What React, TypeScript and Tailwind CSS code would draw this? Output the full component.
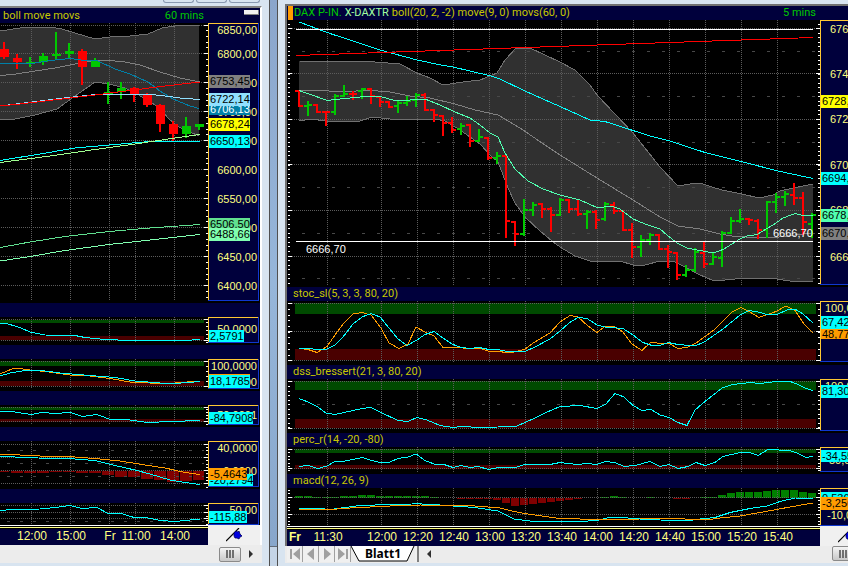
import React from "react";

type Pt = [number, number];
type Line = { color: string; pts: Pt[] };
type Band = { y: number; h: number; color: string };
type Bar = { x: number; y: number; w: number; h: number; color: string };
type Tag = { y: number; h?: number; w: number; text: string; bg: string; fg?: string };
type Label = { y: number; text: string };

const GREEN = "#004a00";
const RED = "#4a0000";
const CYAN = "#00ffff";
const ORANGE = "#ff9c00";
const UP = "#00c800";
const DOWN = "#ff0000";
const GRID = "#5c5c5c";

type Frame = { x: number; w: number; cols: number[]; gridFrom: number; gridTo: number };

const leftFrame: Frame = { x: 0, w: 208, cols: [31, 70, 109, 135, 174], gridFrom: 1, gridTo: 204 };
const rightFrame: Frame = {
  x: 287,
  w: 533,
  cols: [327, 381, 417, 453, 489, 525, 561, 597, 633, 669, 705, 741, 777],
  gridFrom: 292,
  gridTo: 816,
};

const join = (pts: Pt[]) => pts.map((p) => p.join(",")).join(" ");

type PlotProps = {
  frame: Frame;
  top: number;
  height: number;
  bottom: number;
  dotted: number[];
  dashed?: number[];
  bands?: Band[];
  bars?: Bar[];
  lines?: Line[];
  ticks: { from: number; step: number };
  under?: React.ReactNode;
  over?: React.ReactNode;
  labels?: { x: number; y: number; text: string }[];
};

function Plot({ frame, top, height, bottom, dotted, dashed = [], bands = [], bars = [], lines = [], ticks, under, over, labels = [] }: PlotProps) {
  const end = frame.x + frame.w;
  const marks: number[] = [];
  for (let y = ticks.from; y < bottom; y += ticks.step) marks.push(Math.round(y));
  const twoSided = frame.x > 0;
  return (
    <svg className="block min-w-0 flex-1 bg-black" height={height} width="100%">
      <svg
        width="100%"
        height="100%"
        viewBox={`${frame.x} ${top} ${frame.w} ${height}`}
        preserveAspectRatio="none"
        shapeRendering="crispEdges"
        fill="none"
      >
        {under}
        {bands.map((b) => (
          <rect key={b.y} x={twoSided ? 295 : 0} y={b.y} width={frame.gridTo - (twoSided ? 295 : 0)} height={b.h} fill={b.color} />
        ))}
        {bars.map((b) => (
          <rect key={b.x} x={b.x} y={b.y} width={b.w} height={b.h} fill={b.color} />
        ))}
        {frame.cols.map((x) => (
          <path key={x} d={`M${x + 0.5} ${top}V${bottom}`} stroke={GRID} strokeDasharray="1 1" />
        ))}
        {dotted.map((y) => (
          <path key={y} d={`M${frame.gridFrom} ${y + 0.5}H${frame.gridTo}`} stroke={GRID} strokeDasharray="1 1" />
        ))}
        {dashed.map((y) => (
          <path key={y} d={`M${twoSided ? 302 : 7} ${y + 0.5}H${frame.gridTo}`} stroke="#484848" strokeDasharray={twoSided ? "3 12" : "3 10"} />
        ))}
        {lines.map((l, i) => (
          <polyline key={i} points={join(l.pts)} stroke={l.color} />
        ))}
        {over}
        {marks.map((y) => (
          <path key={y} d={`M${end - 2} ${y + 0.5}h2${twoSided ? `M288 ${y + 0.5}h2` : ""}`} stroke="#fff" />
        ))}
        {dotted.map((y) => (
          <path key={y} d={`M${end - 4} ${y + 0.5}h4${twoSided ? `M288 ${y + 0.5}h4` : ""}`} stroke="#fff" />
        ))}
      </svg>
      {labels.map((l) => (
        <text key={l.x} x={`${((l.x - frame.x) / frame.w) * 100}%`} y={l.y - top} className="fill-white text-[11px]">
          {l.text}
        </text>
      ))}
    </svg>
  );
}

type ScaleProps = { top: number; height: number; bottom: number; labels: Label[]; tags: Tag[]; compact?: boolean; labelX?: number };

function Scale({ top, height, bottom, labels, tags, compact, labelX }: ScaleProps) {
  const boxWidth = compact ? 60 : 51;
  return (
    <svg className={compact ? "block w-7 shrink-0 bg-black text-[11px]" : "block w-[52px] shrink-0 bg-black text-[11px]"} height={height}>
      <rect width={boxWidth} height={bottom - top} fill="#1038d0" shapeRendering="crispEdges" />
      <rect width={boxWidth - 1} height={bottom - top - 1} fill="#ffc832" shapeRendering="crispEdges" />
      <rect x="1" y="1" width={boxWidth - 2} height={bottom - top - 2} fill="#00003c" shapeRendering="crispEdges" />
      {labels.map((l) => (
        <text key={l.y} x={labelX ?? 49} y={l.y - top + 4} textAnchor={compact ? "start" : "end"} fill="#ffff80">
          {l.text}
        </text>
      ))}
      {tags.map((t) => (
        <g key={t.text}>
          <rect x="1" y={t.y - top} width={t.w} height={t.h ?? 13} fill={t.bg} shapeRendering="crispEdges" />
          <text x="2" y={t.y - top + 10} fill={t.fg ?? "#000000"}>
            {t.text}
          </text>
        </g>
      ))}
    </svg>
  );
}

function TimeAxis({ frame, labels, line, bold }: { frame: Frame; labels: { x: number; text: string }[]; line: number; bold?: string }) {
  const pct = (x: number) => `${((x - frame.x) / frame.w) * 100}%`;
  return (
    <svg className="block min-w-0 flex-1 bg-[#00003c] text-[12px]" height="20" width="100%">
      <rect width="100%" height={line + 2} fill="#000" />
      <rect width="100%" height="1" fill="#fff" />
      <rect width="100%" y={line} height="1" fill="#ffff80" />
      {bold && (
        <text x="2" y="15" fill="#ffff80" fontWeight="bold">
          {bold}
        </text>
      )}
      {labels.map((l) => (
        <text key={l.text} x={pct(l.x)} y="15" textAnchor="middle" fill="#ffff80">
          {l.text}
        </text>
      ))}
    </svg>
  );
}

function PinButton({ className }: { className: string }) {
  return (
    <button aria-label="Pin scale" className={className}>
      <svg width="18" height="14" viewBox="0 0 18 14" className="block shrink-0">
        <path d="M0 13L13 0" stroke="#000" strokeWidth="1.2" />
        <path d="M8 5l2-2 2 1 1-1 1 3 2 2-2 1-1 2-2-1-2 0-1-2z" fill="#0000e0" stroke="#000060" strokeWidth="0.8" />
      </svg>
    </button>
  );
}

function Thumb() {
  return (
    <button aria-label="Scroll position" className="flex h-[15px] w-[22px] shrink-0 items-center justify-center gap-px rounded-[2px] border border-[#8a8a8a] bg-linear-to-b from-[#f4f4f4] to-[#c8c8c8]">
      <span className="h-2 w-0.5 bg-[#707070]" />
      <span className="h-2 w-0.5 bg-[#707070]" />
      <span className="h-2 w-0.5 bg-[#707070]" />
    </button>
  );
}

function Title({ text = "" }: { text?: string }) {
  return <h2 className="h-3.5 bg-[#00003c] pl-1.5 font-['Roboto',sans-serif] text-[11px] leading-[14px] text-[#c8c800]">{text}</h2>;
}

/* ---------- 60 minute chart ---------- */

const leftUpper: Pt[] = [[0, 31], [20, 28], [50, 27], [62, 29], [75, 33], [85, 36], [95, 39], [110, 37], [130, 36], [148, 34], [162, 28], [175, 26], [199, 25]];
const leftLower: Pt[] = [[0, 120], [15, 119], [35, 115], [57, 109], [75, 96], [88, 87], [95, 82], [109, 84], [125, 88], [137, 94], [147, 100], [160, 108], [168, 118], [177, 126], [190, 132], [199, 136]];

const leftMainLines: Line[] = [
  { color: "#707070", pts: leftUpper },
  { color: "#707070", pts: leftLower },
  { color: "#808080", pts: [[0, 75.5], [13, 74.5], [35, 71], [55, 68], [75, 64], [100, 60], [122, 61.5], [140, 65], [160, 72], [180, 78], [200, 82]] },
];
const leftAverages: Line[] = [
  { color: "#0080a8", pts: [[0, 63.5], [32, 63.5], [50, 60.5], [70, 58.5], [85, 60.5], [98, 61], [115, 69], [130, 74], [148, 82], [160, 91], [173, 99], [190, 106], [199, 108.5]] },
  { color: "#90e0ff", pts: [[0, 106], [60, 98.5], [95, 94.5], [130, 94.5], [152, 94.5], [165, 96], [180, 98], [200, 99.5]] },
  { color: "#ff0000", pts: [[0, 106], [20, 104], [95, 95], [130, 90.5], [165, 86], [200, 82]] },
  { color: CYAN, pts: [[0, 160.5], [40, 154], [75, 148], [109, 145], [150, 141.5], [200, 141.5]] },
  { color: "#a0ff90", pts: [[0, 162.5], [50, 156], [95, 149.5], [135, 144], [165, 139.5], [200, 134.5]] },
  { color: "#60e090", pts: [[0, 247.5], [30, 242], [65, 236.5], [109, 231.5], [150, 228], [200, 224.5]] },
  { color: "#80ffb0", pts: [[0, 261], [30, 256.5], [65, 250.5], [109, 244.5], [150, 240], [200, 234.5]] },
];

// centre, high, low, body top, body bottom, rising
const candles: [number, number, number, number, number, boolean][] = [
  [4, 42, 59, 49, 57, false], [17, 54, 69, 58, 62, false], [30, 57, 67, 62, 64, true], [43, 53, 65, 56, 62, true],
  [56, 32, 60, 54, 56, true], [69, 43, 59, 51, 54, true], [82, 49, 85, 51, 67, false], [95, 58, 67, 61, 67, true],
  [108, 82, 104, 92, 94, true], [121, 82, 99, 88, 92, true], [134, 87, 102, 88, 94, false], [147, 93, 107, 95, 105, false],
  [160, 104, 132, 105, 124, false], [173, 121, 141, 124, 134, false], [186, 117, 138, 126, 134, true], [199, 124, 130, 124, 127, true],
];

function LeftBand() {
  return <polygon points={join([...leftUpper, ...[...leftLower].reverse()])} fill="#303030" />;
}

function Candles() {
  return (
    <>
      {leftMainLines.map((l, i) => (
        <polyline key={i} points={join(l.pts)} stroke={l.color} />
      ))}
      {candles.map(([x, hi, lo, t, b, up]) => (
        <g key={x} fill={up ? UP : DOWN}>
          <rect x={x - 1} y={hi} width="2" height={lo - hi} />
          <rect x={x - 4} y={t} width="9" height={b - t} />
        </g>
      ))}
      {leftAverages.map((l, i) => (
        <polyline key={i} points={join(l.pts)} stroke={l.color} />
      ))}
    </>
  );
}

const leftBars: Bar[] = [
  [0, 9, 1], [11, 12, 2], [24, 12, 2], [37, 12, 2], [50, 12, 1], [63, 12, 1], [76, 12, 2], [89, 12, 2], [102, 12, 4], [115, 12, 6], [128, 12, 6], [141, 12, 8], [154, 12, 9], [167, 12, 11], [180, 12, 10], [193, 11, 9],
].map(([x, w, h]) => ({ x, y: 471, w, h, color: "#800000" }));

type Study = { title: string; plot: Omit<PlotProps, "frame">; scale: Pick<ScaleProps, "labels" | "tags" | "labelX"> };

const leftStudies: Study[] = [
  {
    title: "",
    plot: {
      top: 317, height: 28, bottom: 343, dotted: [319, 340], ticks: { from: 322, step: 4 },
      bands: [{ y: 320, h: 3, color: GREEN }, { y: 336, h: 4, color: RED }],
      lines: [{ color: CYAN, pts: [[0, 323.5], [8, 324], [20, 327.5], [30, 332], [45, 335], [75, 335.5], [85, 337.5], [105, 339.5], [130, 340.5], [185, 340.5], [200, 339.5]] }],
    },
    scale: { labels: [{ y: 329, text: "50,0000" }], tags: [{ y: 330, h: 12, w: 35, text: "2,5791", bg: CYAN }] },
  },
  {
    title: "",
    plot: {
      top: 359, height: 32, bottom: 389, dotted: [361, 386], ticks: { from: 366, step: 5 },
      bands: [{ y: 361, h: 5, color: GREEN }, { y: 381, h: 5, color: RED }],
      lines: [
        { color: ORANGE, pts: [[0, 374], [12, 369], [20, 368.5], [30, 370], [45, 371.5], [70, 375], [90, 376], [110, 378.5], [130, 382], [160, 383.5], [175, 383], [200, 381]] },
        { color: CYAN, pts: [[0, 376], [10, 373], [25, 370.5], [45, 371], [60, 373], [90, 375.5], [115, 377.5], [135, 381], [160, 383], [175, 383.5], [200, 381.5]] },
      ],
    },
    scale: {
      labels: [{ y: 366, text: "100,0000" }, { y: 382, text: "0,0000" }],
      tags: [{ y: 374, h: 4, w: 41, text: "", bg: ORANGE }, { y: 375, w: 41, text: "18,1785", bg: CYAN }],
    },
  },
  {
    title: "",
    plot: {
      top: 405, height: 22, bottom: 425, dotted: [407, 421], ticks: { from: 409, step: 3 },
      bands: [{ y: 407, h: 3, color: GREEN }, { y: 419, h: 3, color: RED }],
      lines: [{ color: CYAN, pts: [[0, 411], [15, 412], [31, 414.5], [42, 412.5], [55, 413.5], [70, 412.5], [83, 416.5], [97, 414.5], [109, 419], [130, 420], [148, 422.5], [170, 421.5], [200, 420.5]] }],
    },
    scale: { labels: [{ y: 415, text: "50,0001" }], tags: [{ y: 412, h: 12, w: 44, text: "-84,7908", bg: CYAN }] },
  },
  {
    title: "",
    plot: {
      top: 441, height: 48, bottom: 487, dotted: [444, 457, 470, 483], dashed: [450, 463, 476], ticks: { from: 447, step: 3.3 },
      bars: leftBars,
      lines: [
        { color: CYAN, pts: [[0, 456], [15, 457], [50, 458.5], [75, 459], [95, 460.5], [115, 465.5], [135, 470], [150, 474], [170, 480], [185, 482.5], [200, 484.5]] },
        { color: ORANGE, pts: [[0, 454.5], [20, 455], [50, 456.5], [75, 457], [100, 459], [120, 461], [145, 465], [165, 468], [185, 472.5], [200, 474.5]] },
      ],
    },
    scale: {
      labels: [{ y: 448, text: "40,0000" }, { y: 471, text: "0,0000" }],
      tags: [{ y: 474, h: 12, w: 44, text: "-20,2794", bg: CYAN }, { y: 468, h: 12, w: 38, text: "-5,4643", bg: ORANGE }],
    },
  },
  {
    title: "",
    plot: {
      top: 503, height: 22, bottom: 525, dotted: [505, 512, 518], dashed: [521], ticks: { from: 508, step: 4 },
      lines: [{ color: CYAN, pts: [[0, 510.5], [12, 509.5], [40, 509], [55, 507.5], [70, 505.5], [82, 508.5], [97, 507.5], [108, 513.5], [123, 514], [134, 517.5], [148, 518], [160, 520.5], [175, 521.5], [190, 520], [200, 519.5]] }],
    },
    scale: { labels: [{ y: 510, text: "50,00" }], tags: [{ y: 511, h: 12, w: 38, text: "-115,88", bg: CYAN }] },
  },
];

/* ---------- 5 minute chart ---------- */

const rightUpper: Pt[] = [[299, 61], [375, 62], [400, 64], [417, 73], [430, 78], [443, 85], [463, 82], [480, 80], [497, 73], [505, 60], [516, 48], [530, 48], [545, 55], [560, 62], [575, 70], [590, 85], [597, 95], [633, 133], [660, 167], [678, 186], [690, 184], [700, 183], [712, 187], [722, 190], [742, 194], [759, 198], [773, 195], [780, 191], [793, 188], [813, 184]];
const rightLower: Pt[] = [[299, 121], [312, 119], [325, 121], [360, 121], [372, 117], [390, 119], [435, 119], [445, 121], [460, 130], [470, 137], [480, 144], [490, 155], [498, 162], [503, 175], [508, 188], [515, 203], [525, 217], [540, 231], [552, 241], [560, 247], [575, 256], [590, 261], [620, 261], [633, 265], [645, 265], [660, 261], [675, 262], [687, 268], [700, 275], [712, 280], [725, 280], [745, 278], [770, 278], [790, 281], [800, 282], [813, 281]];

const rightMainLines: Line[] = [
  { color: "#707070", pts: rightUpper },
  { color: "#707070", pts: rightLower },
  { color: "#808080", pts: [[296, 91], [318, 90.5], [340, 91.5], [372, 90.5], [390, 92], [410, 96], [430, 98], [455, 104], [475, 110], [498, 115], [520, 128], [545, 145], [560, 155], [597, 178], [633, 200], [660, 217], [678, 226], [700, 229], [720, 234], [735, 236.5], [757, 237.5], [775, 237.5], [795, 235], [813, 233]] },
];
const rightAverages: Line[] = [
  { color: "#50ffb0", pts: [[299, 90.5], [312, 95], [327, 100.5], [345, 98.5], [365, 96.5], [380, 96.5], [395, 100.5], [410, 100], [425, 99], [440, 105], [455, 112], [470, 118], [480, 125], [490, 133], [498, 137], [505, 153], [515, 169], [528, 181], [543, 189], [560, 195], [580, 200], [597, 207.5], [612, 206.5], [620, 209], [633, 219], [645, 224], [660, 229], [667, 235], [677, 243], [687, 248], [700, 250.5], [713, 253], [723, 249.5], [740, 239], [747, 236], [757, 234.5], [773, 225], [783, 218], [795, 213.5], [803, 215.5], [813, 215.5]] },
  { color: CYAN, pts: [[299, 22], [330, 33.5], [380, 50], [417, 60], [441, 65], [453, 67], [489, 75.5], [500, 79], [525, 91], [560, 106.5], [590, 120], [605, 121.5], [633, 130.5], [650, 136], [670, 141], [705, 152.5], [741, 161.5], [778, 171], [813, 178.5]] },
  { color: "#ff0000", pts: [[296, 55.5], [813, 37.5]] },
  { color: "#ffffff", pts: [[296, 29.5], [813, 29.5]] },
  { color: "#ffffff", pts: [[296, 241.5], [813, 241.5]] },
];

// open, high, low, close, rising
const ohlc: [number, number, number, number, 0 | 1][] = [
  [91, 91, 106, 106, 0], [106, 102, 115, 105, 1], [105, 105, 112, 112, 0], [112, 112, 125, 112, 0], [112, 95, 114, 96, 1],
  [96, 86, 96, 94, 1], [94, 92, 99, 94, 0], [91, 89, 98, 89, 1], [89, 89, 103, 96, 0], [97, 97, 106, 102, 0],
  [102, 102, 107, 107, 0], [106, 102, 112, 103, 1], [103, 97, 105, 101, 1], [100, 94, 106, 95, 1], [95, 94, 110, 110, 0],
  [110, 110, 121, 115, 0], [116, 116, 135, 123, 0], [123, 118, 132, 130, 0], [129, 124, 134, 126, 1], [125, 125, 146, 141, 0],
  [141, 130, 141, 137, 1], [138, 138, 159, 158, 0], [158, 153, 163, 156, 1], [156, 155, 237, 221, 0], [222, 222, 245, 234, 0],
  [234, 200, 235, 210, 1], [210, 203, 215, 205, 1], [204, 204, 217, 209, 0], [209, 208, 231, 215, 0], [215, 199, 215, 200, 1],
  [200, 200, 212, 209, 0], [209, 200, 215, 214, 0], [214, 211, 228, 212, 1], [212, 211, 228, 220, 0], [219, 203, 220, 204, 1],
  [205, 203, 213, 211, 0], [211, 211, 230, 230, 0], [230, 224, 257, 247, 0], [247, 236, 256, 240, 1], [240, 234, 244, 235, 1],
  [235, 235, 249, 249, 0], [249, 246, 267, 252, 0], [253, 253, 279, 275, 0], [275, 266, 276, 270, 1], [270, 249, 271, 252, 1],
  [253, 243, 267, 264, 0], [264, 253, 264, 257, 1], [258, 232, 266, 233, 1], [233, 218, 233, 221, 1], [221, 210, 222, 219, 1],
  [219, 219, 224, 220, 0], [221, 220, 238, 230, 0], [230, 202, 237, 202, 1], [202, 194, 212, 197, 1], [197, 192, 205, 194, 1],
  [195, 184, 204, 198, 0], [198, 193, 234, 222, 0], [224, 214, 237, 215, 1],
];

function RightBand() {
  return <polygon points={join([...rightUpper, ...[...rightLower].reverse()])} fill="#303030" />;
}

function PriceBars() {
  return (
    <>
      {rightMainLines.map((l, i) => (
        <polyline key={i} points={join(l.pts)} stroke={l.color} />
      ))}
      {ohlc.map(([o, h, l, c, up], i) => {
        const x = 298 + i * 9;
        return (
          <g key={x} fill={up ? UP : DOWN}>
            <rect x={x} y={h - 1} width="2" height={l - h + 2} />
            <rect x={x - 3} y={o - 1} width="3" height="2" />
            <rect x={x + 2} y={c - 1} width="3" height="2" />
          </g>
        );
      })}
      {rightAverages.map((l, i) => (
        <polyline key={i} points={join(l.pts)} stroke={l.color} />
      ))}
    </>
  );
}

const histogram = [
  2, 2, 1, 1, 1, 2, 2, 3, 3, 2, 2, 2, 2, 2, 2, 1, 0, 0, -1, -1, -1, -1, -2, -5, -8, -7, -6, -5, -4, -3, -2, -1, 0, 0, 1, 2, 1, 0, 0, 1, 0, 0, -1, -1, 0, 1, 1, 3, 5, 6, 6, 6, 7, 8, 8, 8, 6, 5,
];
const rightHistogram: Bar[] = histogram.map((v, i) => ({
  x: 295 + i * 9,
  y: v > 0 ? 498 - v : 498,
  w: 8,
  h: Math.abs(v),
  color: v > 0 ? "#008000" : "#800000",
}));

const rightStudies: Study[] = [
  {
    title: "stoc_sl(5, 3, 3, 80, 20)",
    plot: {
      top: 301, height: 64, bottom: 362, dotted: [303, 331, 360], ticks: { from: 309, step: 5.7 },
      bands: [{ y: 303, h: 11, color: GREEN }, { y: 349, h: 11, color: RED }],
      lines: [
        { color: ORANGE, pts: [[299, 348.5], [308, 349.5], [317, 352.5], [327, 346.5], [335, 335], [344, 323], [353, 314], [362, 312.5], [371, 315], [381, 328], [389, 343], [399, 348.5], [408, 344], [416, 327], [425, 332], [434, 336], [443, 347.5], [460, 347.5], [470, 349], [480, 348], [489, 351.5], [498, 351], [507, 353], [517, 351.5], [525, 349], [534, 342.5], [550, 333], [560, 322], [570, 315.5], [578, 317], [588, 326], [597, 332.5], [605, 326.5], [614, 326.5], [623, 332], [632, 344], [642, 350.5], [651, 342], [660, 343.5], [668, 343], [678, 348.5], [687, 347.5], [696, 343], [714, 330], [732, 312], [741, 307.5], [750, 312], [759, 317.5], [776, 311.5], [786, 306], [795, 310.5], [804, 324], [813, 333]] },
        { color: CYAN, pts: [[299, 348.5], [310, 348.5], [318, 350], [327, 349], [335, 345], [343, 337], [353, 324], [362, 317], [371, 313.5], [380, 317], [389, 328], [398, 339], [407, 345.5], [417, 340], [425, 334.5], [434, 331.5], [443, 338], [452, 344], [461, 347.5], [470, 348.5], [479, 347.5], [489, 349.5], [498, 349.5], [507, 351.5], [525, 351.5], [535, 347], [550, 339], [560, 331], [569, 323], [578, 317.5], [587, 318.5], [597, 325], [605, 327], [623, 328.5], [633, 335], [643, 342.5], [652, 345.5], [660, 345.5], [668, 342.5], [678, 344.5], [695, 346], [705, 341.5], [723, 329], [740, 315], [749, 310.5], [758, 312], [767, 314.5], [777, 314.5], [787, 310], [795, 309], [803, 314], [813, 323]] },
      ],
    },
    scale: { labelX: 5, labels: [{ y: 308, text: "100,0" }], tags: [{ y: 328, h: 11, w: 41, text: "48,77", bg: ORANGE }, { y: 316, w: 41, text: "67,42", bg: CYAN }] },
  },
  {
    title: "dss_bressert(21, 3, 80, 20)",
    plot: {
      top: 379, height: 54, bottom: 431, dotted: [381, 428], dashed: [404], ticks: { from: 386, step: 4.6 },
      bands: [{ y: 381, h: 9, color: GREEN }, { y: 419, h: 9, color: RED }],
      lines: [{ color: CYAN, pts: [[299, 398.5], [308, 402], [317, 406.5], [326, 413], [335, 414.5], [344, 412.5], [362, 408.5], [371, 407.5], [380, 412], [398, 420.5], [408, 421.5], [417, 417.5], [427, 420], [440, 425.5], [453, 427.5], [462, 426.5], [480, 427.5], [498, 427], [517, 426], [535, 418], [545, 413], [560, 406.5], [580, 405.5], [597, 408.5], [606, 404], [615, 393.5], [624, 397], [633, 405.5], [642, 410.5], [651, 409.5], [660, 415], [669, 417.5], [678, 422.5], [687, 425.5], [695, 410], [705, 401.5], [722, 388], [733, 384.5], [750, 382.5], [760, 383.5], [772, 382], [790, 381.5], [797, 384], [805, 388], [813, 390.5]] }],
    },
    scale: { labelX: 5, labels: [{ y: 386, text: "100,0" }], tags: [{ y: 385, w: 41, text: "81,30", bg: CYAN }] },
  },
  {
    title: "perc_r(14, -20, -80)",
    plot: {
      top: 447, height: 27, bottom: 472, dotted: [449, 468], ticks: { from: 452, step: 3.5 },
      bands: [{ y: 449, h: 4, color: GREEN }, { y: 465, h: 4, color: RED }],
      lines: [{ color: CYAN, pts: [[299, 466.5], [308, 465.5], [318, 468.5], [327, 466], [335, 461.5], [345, 461], [362, 457.5], [372, 460.5], [380, 462.5], [390, 462], [398, 458.5], [408, 457], [416, 454], [425, 460.5], [434, 464], [444, 464.5], [453, 467.5], [461, 465.5], [470, 467.5], [478, 466.5], [489, 469.5], [498, 467.5], [515, 467.5], [525, 464.5], [550, 464.5], [560, 462.5], [577, 464.5], [587, 463.5], [597, 464.5], [605, 461.5], [615, 462.5], [624, 466.5], [635, 465.5], [650, 461.5], [660, 466.5], [669, 464.5], [678, 468.5], [688, 466.5], [696, 462.5], [705, 465.5], [715, 462.5], [723, 456.5], [740, 452.5], [750, 452.5], [758, 455.5], [768, 449.5], [790, 450.5], [797, 453], [806, 457.5], [813, 456.5]] }],
    },
    scale: { labelX: 9, labels: [{ y: 460, text: "50,0" }], tags: [{ y: 450, h: 12, w: 41, text: "-34,55", bg: CYAN }] },
  },
  {
    title: "macd(12, 26, 9)",
    plot: {
      top: 488, height: 38, bottom: 526, dotted: [497, 514], ticks: { from: 490, step: 3.4 },
      bars: rightHistogram,
      lines: [
        { color: CYAN, pts: [[299, 508.5], [320, 508.5], [330, 509.5], [345, 507.5], [360, 505.5], [390, 504.5], [412, 504], [417, 503], [425, 504.5], [440, 505], [460, 506.5], [475, 507.5], [498, 511], [507, 515.5], [514, 519], [530, 521], [550, 522], [580, 521.5], [597, 520.5], [607, 518], [615, 517], [640, 519], [660, 520], [690, 520.5], [700, 519], [715, 517.5], [730, 512.5], [750, 508.5], [767, 506], [780, 501.5], [795, 498], [813, 498.5]] },
        { color: ORANGE, pts: [[299, 509.5], [330, 509.5], [350, 508], [390, 506], [420, 505], [475, 506], [500, 508], [512, 511], [525, 513.5], [545, 516.5], [560, 518.5], [600, 519.5], [640, 519], [660, 518.5], [710, 519.5], [720, 518], [740, 516], [760, 512.5], [790, 507], [813, 503]] },
      ],
    },
    scale: { labelX: 7, labels: [{ y: 515, text: "-10,0" }], tags: [{ y: 492, h: 12, w: 41, text: " 0,536", bg: CYAN }, { y: 497, w: 41, text: "-3,256", bg: ORANGE }] },
  },
];

function NavButton({ label, path }: { label: string; path: string }) {
  return (
    <button aria-label={label} className="flex h-4 w-4 items-center justify-center border-r border-[#a0a0a0] bg-[#f0f0f0]">
      <svg width="12" height="12" viewBox="0 0 12 12" fill="#a0a0a0">
        <path d={path} />
      </svg>
    </button>
  );
}

function LeftWindow() {
  return (
    <section aria-label="60 minute chart" className="flex w-[270px] shrink-0 flex-col border-r border-[#505050] bg-[#d8e4f0]">
      <div className="flex h-1.5 justify-end gap-0.5 pr-[9px]">
        <button aria-label="Minimize" className="h-[3px] w-[31px] rounded-b-sm border border-t-0 border-[#8898b0]" />
        <button aria-label="Maximize" className="h-[3px] w-[31px] rounded-b-sm border border-t-0 border-[#8898b0]" />
        <button aria-label="Close" className="h-[3px] w-[31px] rounded-b-sm border border-t-0 border-[#8898b0]" />
      </div>
      <div className="mr-[7px] flex flex-col border-t-2 border-r-2 border-t-[#808080] border-r-white bg-black">
        <header className="flex h-[15px] items-center bg-[#00003c] pl-[3px] font-['Roboto',sans-serif] text-[11px] leading-4">
          <h1 className="flex-1 text-[#c8c800]">boll move movs</h1>
          <span className="text-[#00c800]">60 mins</span>
          <button aria-label="Collapse" className="mr-px mb-1.5 ml-10 h-[5px] w-[15px] border-r border-b border-[#808080] bg-[#f0f0f0]" />
        </header>
        <div className="flex">
          <Plot
            frame={leftFrame}
            top={23}
            height={280}
            bottom={300}
            dotted={[25, 53, 82, 111, 140, 169, 198, 227, 256, 285]}
            ticks={{ from: 30, step: 5.8 }}
            under={<LeftBand />}
            over={<Candles />}
          />
          <Scale
            top={23}
            height={280}
            bottom={301}
            labels={[
              { y: 30, text: "6850,00" }, { y: 54, text: "6800,00" }, { y: 83, text: "6750,00" }, { y: 112, text: "6700,00" }, { y: 141, text: "6650,00" },
              { y: 170, text: "6600,00" }, { y: 199, text: "6550,00" }, { y: 228, text: "6500,00" }, { y: 257, text: "6450,00" }, { y: 286, text: "6400,00" },
            ]}
            tags={[
              { y: 75, w: 41, text: "6753,45", bg: "#808080" },
              { y: 103, h: 12, w: 41, text: "6706,13", bg: "#0080a8", fg: "#ffffff" },
              { y: 93, w: 41, text: "6722,14", bg: "#90e0ff" },
              { y: 118, w: 41, text: "6678,24", bg: "#ffff00" },
              { y: 135, w: 41, text: "6650,13", bg: "#00ffff" },
              { y: 218, w: 41, text: "6506,50", bg: "#60e090" },
              { y: 228, w: 41, text: "6488,66", bg: "#80ffb0" },
            ]}
          />
        </div>
        {leftStudies.map((s) => (
          <div key={s.plot.top}>
            <div className="h-3.5 bg-[#00003c]" />
            <div className="flex">
              <Plot frame={leftFrame} {...s.plot} />
              <Scale top={s.plot.top} height={s.plot.height} bottom={s.plot.bottom} {...s.scale} />
            </div>
          </div>
        ))}
        <div className="flex">
          <TimeAxis
            frame={leftFrame}
            line={2}
            labels={[{ x: 32, text: "12:00" }, { x: 71, text: "15:00" }, { x: 110, text: "Fr" }, { x: 136, text: "11:00" }, { x: 175, text: "14:00" }]}
          />
          <PinButton className="flex h-5 w-[52px] items-center bg-[#f0f0f0] pl-[18px]" />
        </div>
      </div>
      <div className="mr-[7px] flex h-[18px] items-center justify-end gap-2 bg-[#ececec] pr-2">
        <Thumb />
        <button aria-label="Scroll right">
          <svg width="5" height="8" viewBox="0 0 5 8" className="block">
            <path d="M0 0l4 4-4 4z" fill="#303030" />
          </svg>
        </button>
      </div>
    </section>
  );
}

const rightTimes = ["12:00", "12:20", "12:40", "13:00", "13:20", "13:40", "14:00", "14:20", "14:40", "15:00", "15:20", "15:40"].map((text, i) => ({
  x: 382 + i * 36,
  text,
}));

function RightWindow() {
  return (
    <section aria-label="5 minute chart" className="flex min-w-0 flex-1 flex-col border-l border-[#505050] bg-[#d8e4f0] pt-1 pl-[7px]">
      <div className="flex flex-col border-t-2 border-l-2 border-[#707070] bg-black">
        <header className="flex h-3.5 items-center overflow-hidden bg-[#00003c] pr-8 pl-px font-['Roboto',sans-serif] text-[11px] leading-[14px] whitespace-nowrap">
          <span className="mr-px h-3.5 w-[5px] bg-[#ff9c00]" />
          <h1 className="flex flex-1 gap-[3px]">
            <span className="text-[#00c800]">DAX P-IN.</span>
            <span className="text-[#a0ffa0]">X-DAXTR</span>
            <span className="text-[#c8c800]">boll(20, 2, -2) move(9, 0) movs(60, 0)</span>
          </h1>
          <span className="text-[#00c800]">5 mins</span>
        </header>
        <div className="flex">
          <Plot
            frame={rightFrame}
            top={20}
            height={267}
            bottom={285}
            dotted={[28, 73, 119, 164, 210, 256]}
            dashed={[51, 96, 142, 187, 233, 278]}
            ticks={{ from: 23.5, step: 4.55 }}
            under={<RightBand />}
            over={<PriceBars />}
            labels={[{ x: 306, y: 253, text: "6666,70" }, { x: 773, y: 237, text: "6666,70" }]}
          />
          <Scale
            compact
            labelX={10}
            top={20}
            height={267}
            bottom={285}
            labels={[{ y: 29, text: "676" }, { y: 74, text: "674" }, { y: 119, text: "672" }, { y: 165, text: "670" }, { y: 210, text: "668" }, { y: 257, text: "666" }]}
            tags={[
              { y: 95, w: 41, text: "6728,", bg: "#ffff00" },
              { y: 172, w: 41, text: "6694,", bg: "#00ffff" },
              { y: 209, w: 41, text: "6678,", bg: "#50ffb0" },
              { y: 227, w: 41, text: "6670,", bg: "#808080" },
            ]}
          />
        </div>
        {rightStudies.map((s) => (
          <div key={s.title}>
            <Title text={s.title} />
            <div className="flex">
              <Plot frame={rightFrame} {...s.plot} />
              <Scale compact top={s.plot.top} height={s.plot.height} bottom={s.plot.bottom} {...s.scale} />
            </div>
          </div>
        ))}
        <div className="flex">
          <TimeAxis frame={rightFrame} line={2} bold="Fr" labels={[{ x: 328, text: "11:30" }, ...rightTimes]} />
          <PinButton className="flex h-5 w-7 items-center overflow-hidden bg-[#f0f0f0] pl-[18px]" />
        </div>
      </div>
      <div className="flex h-[17px] items-start overflow-hidden bg-[#ececec] pl-0.5">
        <NavButton label="First sheet" path="M1 1h2v10H1zM11 0v12L4 6z" />
        <NavButton label="Previous sheet" path="M9 0v12L2 6z" />
        <NavButton label="Next sheet" path="M3 0v12l7-6z" />
        <NavButton label="Last sheet" path="M9 1h2v10H9zM1 0v12l7-6z" />
        <button className="relative flex h-4 w-16 items-center justify-center font-['Noto_Sans',sans-serif] text-[12px] leading-4 font-bold text-black">
          <svg className="absolute inset-0" width="64" height="16" viewBox="0 0 64 16">
            <path d="M0 0l8 15h48l7-15z" fill="#fff" />
            <path d="M0 0l8 15h48l7-15" fill="none" stroke="#000" />
          </svg>
          <span className="relative">Blatt1</span>
        </button>
        <span className="h-4 w-1 border-r-2 border-[#808080] bg-[#f0f0f0]" />
        <button aria-label="Scroll left" className="ml-2 flex h-4 items-center">
          <svg width="4" height="8" viewBox="0 0 4 8" className="block">
            <path d="M4 0L0 4l4 4z" fill="#303030" />
          </svg>
        </button>
        <span className="flex-1" />
        <div className="w-4 shrink-0">
          <Thumb />
        </div>
      </div>
    </section>
  );
}

export default function App() {
  return (
    <main className="flex h-screen w-full overflow-hidden bg-[#8faacb] font-['Liberation_Sans',Arial,sans-serif]">
      <LeftWindow />
      <div className="flex w-[7px] shrink-0 flex-col bg-linear-to-b from-[#8ba6cc] via-[#96b6da] to-[#86a5ca]">
        <span className="mt-auto h-5 border-t border-[#606a78] bg-[#c4d4e6]" />
      </div>
      <RightWindow />
    </main>
  );
}
